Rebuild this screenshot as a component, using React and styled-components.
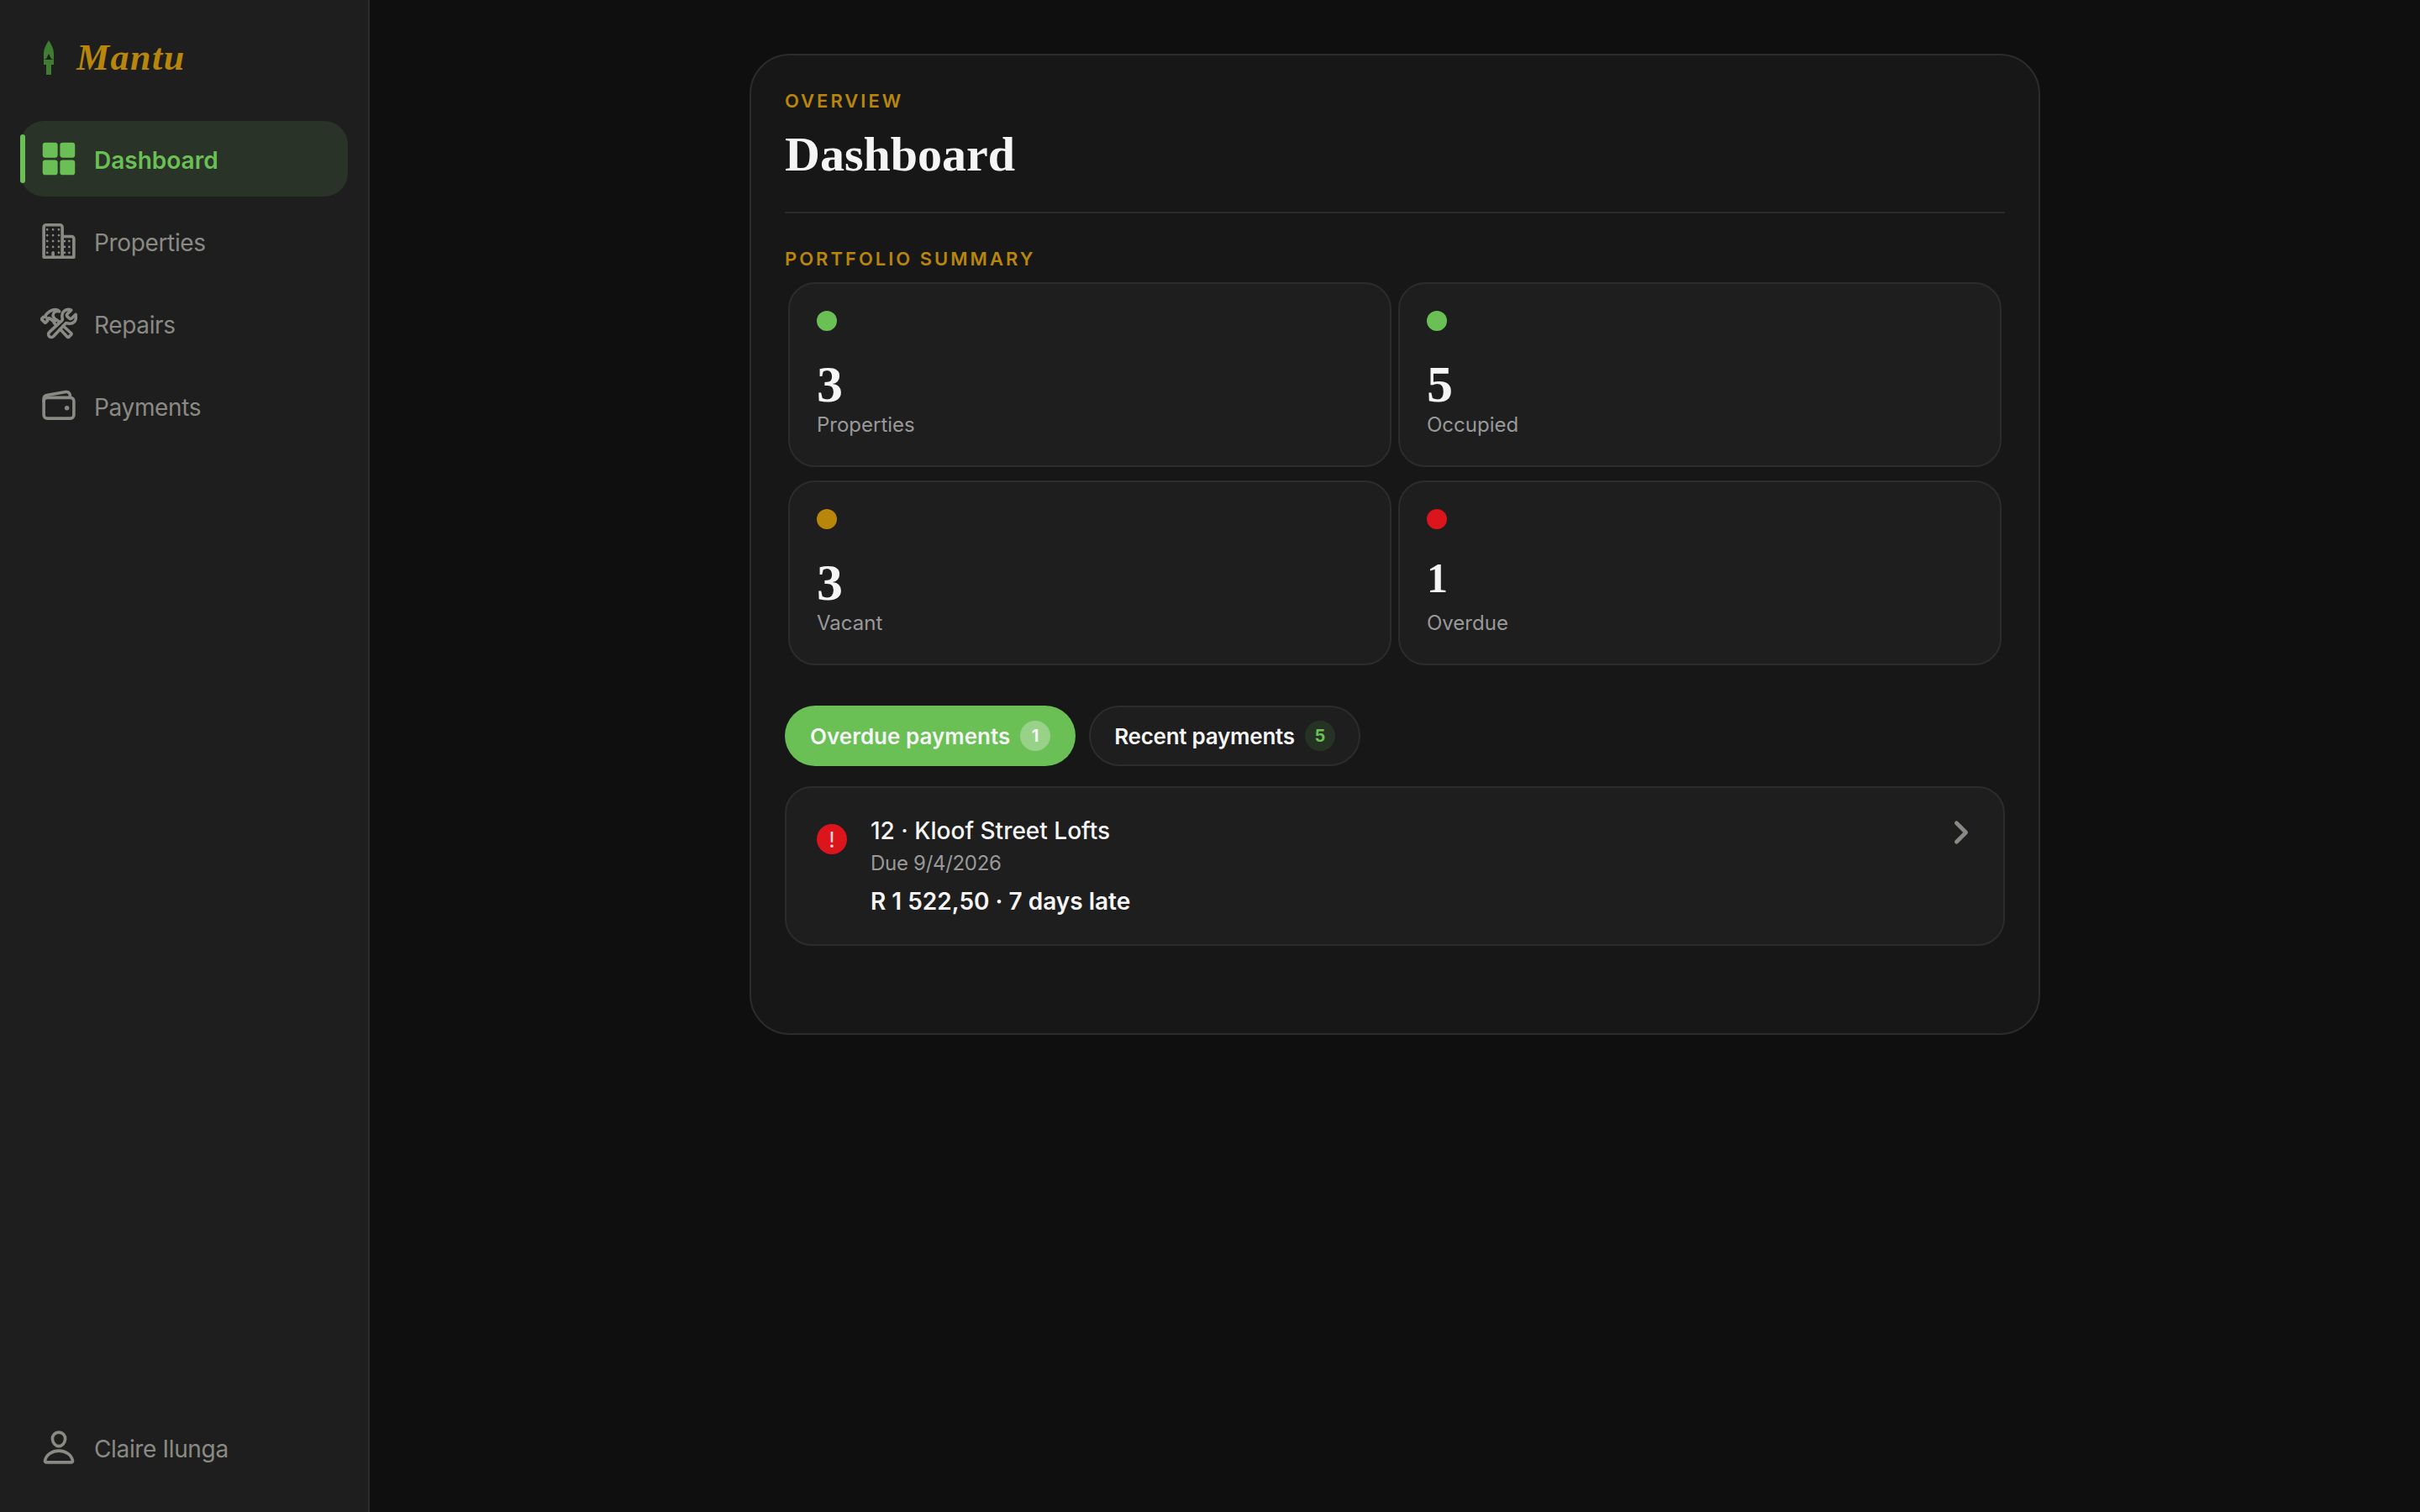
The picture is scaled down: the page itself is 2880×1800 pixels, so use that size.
import React from 'react';
import styled, { createGlobalStyle } from 'styled-components';
import {
  IoGrid,
  IoBusinessOutline,
  IoConstructOutline,
  IoWalletOutline,
  IoPersonOutline,
  IoChevronForward,
} from 'react-icons/io5';

const colors = {
  page: '#0f0f0f',
  sidebar: '#1e1e1e',
  panel: '#171717',
  card: '#1e1e1e',
  line: '#2c2c2c',
  green: '#6abf55',
  gold: '#b8860b',
  red: '#dc141c',
  white: '#f5f5f5',
  muted: '#999999',
  navText: '#8a8a84',
};

const sans = '"Inter", "Liberation Sans", sans-serif';
const serif = '"Liberation Serif", "Times New Roman", serif';

const GlobalStyle = createGlobalStyle`
  html, body {
    margin: 0;
    padding: 0;
    height: 100%;
    background: ${colors.page};
  }
  * { box-sizing: border-box; }
  #root { height: 100%; }
`;

const Shell = styled.div`
  display: flex;
  min-height: 1800px;
  font-family: ${sans};
`;

const Sidebar = styled.aside`
  width: 440px;
  flex-shrink: 0;
  display: flex;
  flex-direction: column;
  background: ${colors.sidebar};
  border-right: 2px solid ${colors.line};
  padding: 0 24px;
`;

const Brand = styled.div`
  display: flex;
  align-items: center;
  height: 144px;
  padding: 0 0 8px 28px;
  gap: 27px;
`;

const BrandName = styled.span`
  font-family: ${serif};
  font-style: italic;
  font-weight: 700;
  font-size: 44px;
  letter-spacing: 1.5px;
  color: ${colors.gold};
`;

const Nav = styled.nav`
  display: flex;
  flex-direction: column;
  gap: 8px;
`;

const NavItem = styled.a`
  position: relative;
  display: flex;
  align-items: center;
  gap: 20px;
  height: 90px;
  padding: 0 24px;
  border-radius: 28px;
  font-size: 28px;
  font-weight: ${p => (p.$active ? 600 : 400)};
  letter-spacing: ${p => (p.$active ? '0' : '-0.35px')};
  color: ${p => (p.$active ? colors.green : colors.navText)};
  background: ${p => (p.$active ? '#2a3327' : 'transparent')};
  svg { font-size: 44px; flex-shrink: 0; }
  svg [stroke-width] { stroke-width: 42px; }
`;

const NavLabel = styled.span`
  padding-top: 3px;
`;

const ActiveBar = styled.span`
  position: absolute;
  left: 0;
  top: 16px;
  bottom: 16px;
  width: 6px;
  border-radius: 3px;
  background: ${colors.green};
`;

const UserRow = styled(NavItem)`
  margin-top: auto;
  margin-bottom: 32px;
`;

const Main = styled.main`
  flex: 1;
  display: flex;
  justify-content: center;
  align-items: flex-start;
  padding-top: 64px;
`;

const Panel = styled.section`
  width: 1536px;
  height: 1168px;
  padding: 40px;
  background: ${colors.panel};
  border: 2px solid ${colors.line};
  border-radius: 48px;
`;

const Eyebrow = styled.div`
  font-size: 22px;
  line-height: 28px;
  font-weight: 600;
  letter-spacing: 3px;
  text-transform: uppercase;
  color: ${colors.gold};
`;

const Title = styled.h1`
  margin: 12px 0 0;
  font-family: ${serif};
  font-weight: 700;
  font-size: 58px;
  line-height: 76px;
  color: ${colors.white};
`;

const Divider = styled.hr`
  margin: 30px 0 0;
  border: 0;
  height: 2px;
  background: ${colors.line};
`;

const SectionHead = styled(Eyebrow)`
  margin-top: 39px;
  line-height: 30px;
`;

const StatGrid = styled.div`
  display: grid;
  grid-template-columns: 1fr 1fr;
  column-gap: 8px;
  row-gap: 16px;
  margin-top: 13px;
  padding: 0 4px;
`;

const StatCard = styled.div`
  height: 220px;
  padding: 32px;
  background: ${colors.card};
  border: 2px solid ${colors.line};
  border-radius: 32px;
`;

const Dot = styled.span`
  display: block;
  width: 24px;
  height: 24px;
  border-radius: 50%;
  background: ${p => p.$color};
`;

const StatValue = styled.div`
  height: 64px;
  margin-top: 20px;
  font-family: ${serif};
  font-weight: 700;
  font-size: ${p => (p.$low ? '50px' : '62px')};
  line-height: ${p => (p.$low ? '76px' : '86px')};
  color: ${colors.white};
`;

const StatLabel = styled.div`
  margin-top: 12px;
  font-size: 24px;
  line-height: 32px;
  color: ${colors.muted};
`;

const Tabs = styled.div`
  display: flex;
  gap: 16px;
  margin-top: 48px;
`;

const Tab = styled.button`
  display: flex;
  align-items: center;
  gap: 12px;
  height: 72px;
  padding: 0 ${p => (p.$active ? 30 : 28)}px;
  border-radius: 36px;
  border: ${p => (p.$active ? 'none' : `2px solid ${colors.line}`)};
  background: ${p => (p.$active ? colors.green : colors.card)};
  font-family: ${sans};
  font-size: 26px;
  font-weight: 600;
  letter-spacing: ${p => (p.$active ? '0' : '-0.25px')};
  color: ${colors.white};
`;

const TabCount = styled.span`
  display: flex;
  align-items: center;
  justify-content: center;
  width: 36px;
  height: 36px;
  border-radius: 50%;
  font-size: 20px;
  font-weight: 700;
  background: ${p => (p.$active ? 'rgba(255,255,255,0.3)' : '#263324')};
  color: ${p => (p.$active ? colors.white : colors.green)};
`;

const AlertCard = styled.div`
  display: flex;
  align-items: flex-start;
  margin-top: 24px;
  height: 190px;
  padding: 33px 30px 0 36px;
  background: ${colors.card};
  border: 2px solid ${colors.line};
  border-radius: 32px;
`;

const AlertIcon = styled.span`
  display: flex;
  align-items: center;
  justify-content: center;
  flex-shrink: 0;
  width: 36px;
  height: 36px;
  margin-top: 10px;
  border-radius: 50%;
  background: ${colors.red};
  font-size: 26px;
  font-weight: 400;
  color: rgba(255, 255, 255, 0.85);
`;

const AlertBody = styled.div`
  flex: 1;
  margin-left: 28px;
`;

const AlertTitle = styled.div`
  font-size: 28px;
  line-height: 36px;
  font-weight: 500;
  color: ${colors.white};
`;

const AlertDue = styled.div`
  margin-top: 5px;
  font-size: 24px;
  line-height: 32px;
  letter-spacing: -0.3px;
  color: ${colors.muted};
`;

const AlertAmount = styled.div`
  margin-top: 11px;
  font-size: 28px;
  line-height: 36px;
  font-weight: 600;
  color: ${colors.white};
`;

const Chevron = styled(IoChevronForward)`
  flex-shrink: 0;
  font-size: 40px;
  color: ${colors.navText};
  [stroke-width] { stroke-width: 60px; }
`;

// small torch mark next to the brand name
const TorchLogo = () => (
  <svg width="12" height="41" viewBox="0 0 12 41" aria-hidden="true">
    <path d="M6 0 C9 5 12 10 12 16 L12 23 L9 22 L6 16 L3 22 L0 23 L0 16 C0 10 3 5 6 0 Z" fill="#3f7d33" />
    <rect x="0" y="23" width="12" height="6" fill="#3f7d33" />
    <rect x="3" y="29" width="6" height="12" fill="#3f7d33" />
  </svg>
);

const navLinks = [
  { label: 'Dashboard', Icon: IoGrid, active: true },
  { label: 'Properties', Icon: IoBusinessOutline },
  { label: 'Repairs', Icon: IoConstructOutline },
  { label: 'Payments', Icon: IoWalletOutline },
];

const stats = [
  { value: '3', label: 'Properties', color: colors.green },
  { value: '5', label: 'Occupied', color: colors.green },
  { value: '3', label: 'Vacant', color: colors.gold },
  { value: '1', label: 'Overdue', color: colors.red, low: true },
];

const App = () => {
  return (
    <Shell>
      <GlobalStyle />
      <Sidebar>
        <Brand>
          <TorchLogo />
          <BrandName>Mantu</BrandName>
        </Brand>
        <Nav>
          {navLinks.map(({ label, Icon, active }) => (
            <NavItem key={label} $active={active}>
              {active && <ActiveBar />}
              <Icon />
              <NavLabel>{label}</NavLabel>
            </NavItem>
          ))}
        </Nav>
        <UserRow>
          <IoPersonOutline />
          <NavLabel>Claire Ilunga</NavLabel>
        </UserRow>
      </Sidebar>
      <Main>
        <Panel>
          <Eyebrow>Overview</Eyebrow>
          <Title>Dashboard</Title>
          <Divider />
          <SectionHead>Portfolio summary</SectionHead>
          <StatGrid>
            {stats.map((stat, index) => (
              <StatCard key={index}>
                <Dot $color={stat.color} />
                <StatValue $low={stat.low}>{stat.value}</StatValue>
                <StatLabel>{stat.label}</StatLabel>
              </StatCard>
            ))}
          </StatGrid>
          <Tabs>
            <Tab $active>
              Overdue payments
              <TabCount $active>1</TabCount>
            </Tab>
            <Tab>
              Recent payments
              <TabCount>5</TabCount>
            </Tab>
          </Tabs>
          <AlertCard>
            <AlertIcon>!</AlertIcon>
            <AlertBody>
              <AlertTitle>12 · Kloof Street Lofts</AlertTitle>
              <AlertDue>Due 9/4/2026</AlertDue>
              <AlertAmount>R 1 522,50 · 7 days late</AlertAmount>
            </AlertBody>
            <Chevron />
          </AlertCard>
        </Panel>
      </Main>
    </Shell>
  );
};

export default App;
